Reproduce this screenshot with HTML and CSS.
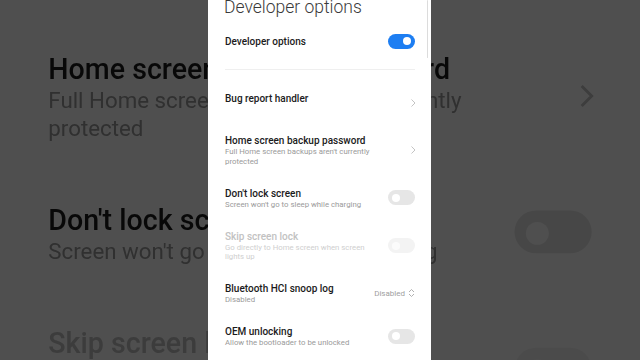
FILE: index.html
```html
<!DOCTYPE html>
<html lang="en">
<head>
<meta charset="utf-8">
<title>Developer options</title>
<link rel="stylesheet" href="styles.css">
</head>
<body>
<div class="screen">
  <div class="backdrop" aria-hidden="true">
    <div class="phone">
      <div class="header">Developer options</div>
      <div class="row master"><div class="text"><div class="title">Developer options</div></div><span class="toggle on"></span></div>
      <div class="divider"></div>
      <div class="row"><div class="text tall"><div class="title">Bug report handler</div></div><svg class="chev" width="6" height="10" viewBox="0 0 6 10"><path d="M1.5 1.5L5 5l-3.5 3.5"/></svg></div>
      <div class="row"><div class="text"><div class="title">Home screen backup password</div><div class="sub">Full Home screen backups aren't currently protected</div></div><svg class="chev" width="6" height="10" viewBox="0 0 6 10"><path d="M1.5 1.5L5 5l-3.5 3.5"/></svg></div>
      <div class="row"><div class="text"><div class="title">Don't lock screen</div><div class="sub">Screen won't go to sleep while charging</div></div><span class="toggle"></span></div>
      <div class="row disabled"><div class="text"><div class="title">Skip screen lock</div><div class="sub">Go directly to Home screen when screen lights up</div></div><span class="toggle"></span></div>
      <div class="row"><div class="text"><div class="title">Bluetooth HCI snoop log</div><div class="sub">Disabled</div></div><span class="value">Disabled<svg width="7" height="10" viewBox="0 0 7 10"><path d="M1 4l2.5-2.5L6 4M1 6l2.5 2.5L6 6"/></svg></span></div>
      <div class="row"><div class="text"><div class="title">OEM unlocking</div><div class="sub">Allow the bootloader to be unlocked</div></div><span class="toggle"></span></div>
    </div>
  </div>

  <div class="phone main">
    <div class="header">Developer options</div>
    <div class="row master"><div class="text"><div class="title">Developer options</div></div><span class="toggle on"></span></div>
    <div class="divider"></div>
    <div class="row"><div class="text tall"><div class="title">Bug report handler</div></div><svg class="chev" width="6" height="10" viewBox="0 0 6 10"><path d="M1.5 1.5L5 5l-3.5 3.5"/></svg></div>
    <div class="row"><div class="text"><div class="title">Home screen backup password</div><div class="sub">Full Home screen backups aren't currently protected</div></div><svg class="chev" width="6" height="10" viewBox="0 0 6 10"><path d="M1.5 1.5L5 5l-3.5 3.5"/></svg></div>
    <div class="row"><div class="text"><div class="title">Don't lock screen</div><div class="sub">Screen won't go to sleep while charging</div></div><span class="toggle"></span></div>
    <div class="row disabled"><div class="text"><div class="title">Skip screen lock</div><div class="sub">Go directly to Home screen when screen lights up</div></div><span class="toggle"></span></div>
    <div class="row"><div class="text"><div class="title">Bluetooth HCI snoop log</div><div class="sub">Disabled</div></div><span class="value">Disabled<svg width="7" height="10" viewBox="0 0 7 10"><path d="M1 4l2.5-2.5L6 4M1 6l2.5 2.5L6 6"/></svg></span></div>
    <div class="row"><div class="text"><div class="title">OEM unlocking</div><div class="sub">Allow the bootloader to be unlocked</div></div><span class="toggle"></span></div>
    <span class="scrollbar"></span>
  </div>
</div>
</body>
</html>
```

FILE: styles.css
```css
* { box-sizing: border-box; }
html, body { margin: 0; padding: 0; }
body {
  width: 640px;
  height: 360px;
  overflow: hidden;
  background: #4f4f4f;
  font-family: Roboto, "Noto Sans", "Liberation Sans", sans-serif;
}
.screen {
  position: relative;
  width: 640px;
  height: 360px;
  overflow: hidden;
  background: #4f4f4f;
}
.backdrop {
  position: absolute;
  inset: 0;
  filter: brightness(0.31) blur(0.6px);
}
.backdrop .phone {
  position: absolute;
  left: 208px;
  top: 0;
  transform-origin: 112px 179px;
  transform: scale(2.86);
}
.phone {
  width: 223px;
  height: 360px;
  background: #fff;
  padding: 0 16px 0 17px;
  overflow: hidden;
}
.phone.main {
  position: relative;
  margin-left: 208px;
}
.header {
  font-size: 17.5px;
  font-weight: 300;
  color: #3a3a3a;
  line-height: 20px;
  margin-top: -3px;
  height: 26px;
  margin-left: -1px;
  white-space: nowrap;
}
.row {
  display: flex;
  align-items: center;
  justify-content: space-between;
  padding: 10.25px 0;
}
.row.master {
  padding: 0;
  min-height: 36px;
}
.text { flex: 1; min-width: 0; padding-right: 18px; }
.text.tall { min-height: 22px; }
.title {
  font-size: 10px;
  font-weight: 500;
  color: #1b1b1b;
  line-height: 13px;
  white-space: nowrap;
}
.sub {
  font-size: 7.8px;
  color: #9a9a9a;
  line-height: 9.5px;
}
.disabled .title { color: #c2c2c2; }
.disabled .sub { color: #cfcfcf; }
.divider {
  height: 1px;
  background: #efefef;
  margin: 10px 0 11.25px;
}
.toggle {
  flex: none;
  position: relative;
  width: 27px;
  height: 15px;
  border-radius: 8px;
  background: #e6e6e6;
}
.toggle::after {
  content: "";
  position: absolute;
  top: 3.5px;
  left: 4px;
  width: 8px;
  height: 8px;
  border-radius: 50%;
  background: #fff;
}
.toggle.on { background: #1d7ef2; }
.toggle.on::after { left: auto; right: 4px; }
.disabled .toggle { background: #f3f3f3; }
.disabled .toggle::after { background: #fbfbfb; }
.chev {
  flex: none;
  margin-right: -1px;
}
.chev path {
  fill: none;
  stroke: #c4c4c4;
  stroke-width: 1;
}
.value {
  flex: none;
  display: flex;
  align-items: center;
  gap: 3px;
  font-size: 8px;
  color: #a0a0a0;
}
.value path {
  fill: none;
  stroke: #a8a8a8;
  stroke-width: 0.9;
}
.scrollbar {
  position: absolute;
  right: 3px;
  top: 0;
  width: 1.5px;
  height: 58px;
  background: #dcdcdc;
  border-radius: 1px;
}
```
